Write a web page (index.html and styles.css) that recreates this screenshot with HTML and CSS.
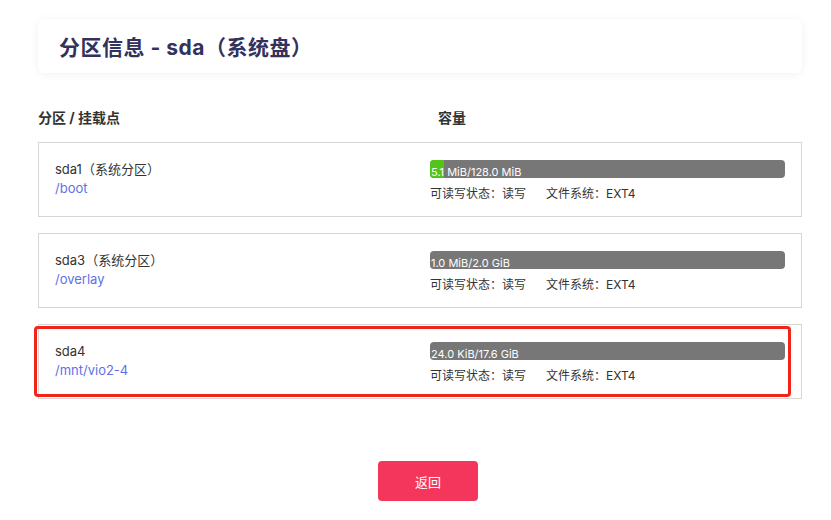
FILE: index.html
```html
<!DOCTYPE html>
<html lang="zh">
<head>
<meta charset="utf-8">
<link rel="stylesheet" href="styles.css">
</head>
<body>
<div class="page">
  <div class="head-card"><h1 class="title">分区信息 - sda（系统盘）</h1></div>
  <div class="cols">
    <div class="col-left">分区 / 挂载点</div>
    <div class="col-right">容量</div>
  </div>
  <div class="list">
    <div class="part">
      <div class="part-left">
        <div class="part-name">sda1（系统分区）</div>
        <div class="part-mount">/boot</div>
      </div>
      <div class="part-right">
        <div class="bar"><div class="fill" style="width:14px"></div><span class="bar-text">5.1 MiB/128.0 MiB</span></div>
        <div class="meta"><span class="meta-rw">可读写状态：读写</span><span>文件系统：EXT4</span></div>
      </div>
    </div>
    <div class="part">
      <div class="part-left">
        <div class="part-name">sda3（系统分区）</div>
        <div class="part-mount">/overlay</div>
      </div>
      <div class="part-right">
        <div class="bar"><div class="fill" style="width:0px"></div><span class="bar-text">1.0 MiB/2.0 GiB</span></div>
        <div class="meta"><span class="meta-rw">可读写状态：读写</span><span>文件系统：EXT4</span></div>
      </div>
    </div>
    <div class="part selected">
      <div class="part-left">
        <div class="part-name">sda4</div>
        <div class="part-mount">/mnt/vio2-4</div>
      </div>
      <div class="part-right">
        <div class="bar"><div class="fill" style="width:0px"></div><span class="bar-text">24.0 KiB/17.6 GiB</span></div>
        <div class="meta"><span class="meta-rw">可读写状态：读写</span><span>文件系统：EXT4</span></div>
      </div>
      <div class="highlight"></div>
    </div>
  </div>
  <div class="actions"><button class="btn-back">返回</button></div>
</div>
</body>
</html>
```
FILE: styles.css
```css
* { box-sizing: border-box; }
html, body { margin: 0; padding: 0; background: #fff; }
body {
  font-family: Inter, "Noto Sans CJK SC", sans-serif;
  color: #333;
}
.page {
  width: 764px;
  margin-left: 38px;
  padding-top: 19px;
}
.head-card {
  height: 54px;
  border-radius: 6px;
  background: #fff;
  box-shadow: 0 1px 10px rgba(0,0,0,0.06);
  padding: 0 21px;
  display: flex;
  align-items: center;
}
.title {
  margin: 0;
  font-size: 21px;
  font-weight: 700;
  color: #32325d;
  letter-spacing: 0.5px;
}
.cols {
  display: flex;
  margin-top: 34px;
  font-size: 14px;
  font-weight: 700;
  color: #333;
  height: 20px;
  align-items: center;
}
.col-left { width: 400px; }
.list {
  margin-top: 15px;
  display: flex;
  flex-direction: column;
  gap: 16px;
}
.part {
  position: relative;
  height: 75px;
  border: 1px solid #d6d6d6;
  display: flex;
  align-items: center;
  padding-left: 16px;
}
.part-left { width: 375px; margin-top: -2px; }
.part-name { font-size: 13px; color: #333; line-height: 19px; }
.part-mount { font-size: 13px; color: #5e72e4; line-height: 19px; }
.part-right { width: 355px; padding-top: 1px; }
.bar {
  position: relative;
  height: 18px;
  background: #777;
  border-radius: 4px;
  overflow: hidden;
}
.fill {
  position: absolute;
  left: 0; top: 0; bottom: 0;
  background: #52c41a;
}
.bar-text {
  position: relative;
  font-size: 11px;
  color: #fff;
  line-height: 18px;
  padding-left: 1px;
}
.meta {
  margin-top: 6px;
  font-size: 12px;
  color: #333;
  display: flex;
}
.meta-rw { width: 116px; }
.highlight {
  position: absolute;
  left: -5px; top: 1px; right: 10px; bottom: 1px;
  border: 3px solid #f0241b;
  border-radius: 4px;
  pointer-events: none;
}
.actions {
  display: flex;
  justify-content: center;
  padding-left: 16px;
  margin-top: 62px;
}
.btn-back {
  width: 100px;
  height: 40px;
  border: 0;
  border-radius: 4px;
  background: #f5365c;
  color: #fff;
  font-family: inherit;
  font-size: 13px;
}
```
